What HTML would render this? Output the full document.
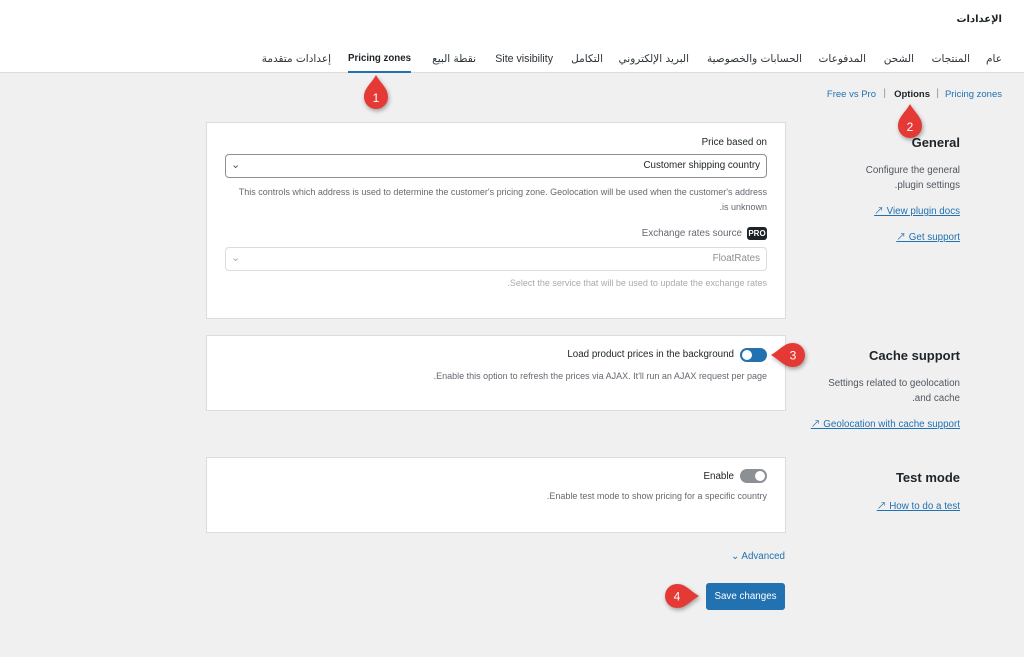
<!DOCTYPE html>
<html><head><meta charset="utf-8"><style>
*{margin:0;padding:0;box-sizing:border-box}
body{width:1024px;height:657px;background:#f0f0f1;font-family:"Liberation Sans","Noto Sans CJK SC",sans-serif;position:relative;overflow:hidden;color:#1d2327}
.a{position:absolute;white-space:nowrap}
.r{text-align:right}
#hdr{position:absolute;left:0;top:0;width:1024px;height:73px;background:#fff;border-bottom:1px solid #dcdcde}
.tab{position:absolute;top:51px;font-size:11px;line-height:16px;color:#2c3338}
.ar{direction:rtl;font-family:"DejaVu Sans",sans-serif;font-size:10.5px}
.card{position:absolute;left:206px;width:580px;background:#fff;border:1px solid #dcdcde}
.sel{position:absolute;left:225px;width:542px;height:24px;border:1px solid #8c8f94;border-radius:4px;background:#fff}
.lnk{color:#2271b1;text-decoration:underline;font-size:9.8px}
.h{font-size:13px;font-weight:bold;color:#1d2327}
.g{font-size:9px;color:#646970}
</style></head><body>
<div id="hdr"></div>
<div class="a ar" style="right:22px;top:14px;font-size:10px;font-weight:bold">الإعدادات</div>
<div class="tab a ar" style="right:22px">عام</div>
<div class="tab a ar" style="right:54px">المنتجات</div>
<div class="tab a ar" style="right:110px">الشحن</div>
<div class="tab a ar" style="right:158px">المدفوعات</div>
<div class="tab a ar" style="right:222px">الحسابات والخصوصية</div>
<div class="tab a ar" style="right:335px">البريد الإلكتروني</div>
<div class="tab a ar" style="right:421px">التكامل</div>
<div class="tab a" style="right:471px;font-size:10.6px;color:#2c3338">Site visibility</div>
<div class="tab a ar" style="right:548px">نقطة البيع</div>
<div class="tab a" style="right:613px;font-weight:bold;color:#1d2327;font-size:9.7px">Pricing zones</div>
<div class="a" style="left:348px;top:71px;width:63px;height:2px;background:#2271b1"></div>
<div class="tab a ar" style="right:693px">إعدادات متقدمة</div>

<div class="a" style="right:22px;top:89px;font-size:9.5px;color:#2271b1">Pricing zones</div>
<div class="a" style="right:85px;top:88px;font-size:10px;color:#8c8f94">|</div>
<div class="a" style="right:94px;top:89px;font-size:9.5px;font-weight:bold">Options</div>
<div class="a" style="right:138px;top:88px;font-size:10px;color:#8c8f94">|</div>
<div class="a" style="right:148px;top:89px;font-size:9.5px;color:#2271b1">Free vs Pro</div>

<div class="a h" style="right:64px;top:135px">General</div>
<div class="a r" style="right:64px;top:163px;line-height:15px;font-size:9.8px;color:#50575e">Configure the general<br>.plugin settings</div>
<div class="a lnk" style="right:64px;top:203px">↗ View plugin docs</div>
<div class="a lnk" style="right:64px;top:229px">↗ Get support</div>

<div class="a h" style="right:64px;top:348px">Cache support</div>
<div class="a r" style="right:64px;top:376px;line-height:15px;font-size:9.8px;color:#50575e">Settings related to geolocation<br>.and cache</div>
<div class="a lnk" style="right:64px;top:416px">↗ Geolocation with cache support</div>

<div class="a h" style="right:64px;top:470px">Test mode</div>
<div class="a lnk" style="right:64px;top:498px">↗ How to do a test</div>

<div class="card" style="top:122px;height:197px"></div>
<div class="a" style="right:257px;top:137px;font-size:9.8px">Price based on</div>
<div class="sel" style="top:154px"></div>
<div class="a" style="left:231px;top:158px;font-size:11px;color:#50575e">⌄</div>
<div class="a" style="right:264px;top:160px;font-size:9.8px">Customer shipping country</div>
<div class="a r g" style="right:257px;top:185px;line-height:15px">This controls which address is used to determine the customer's pricing zone. Geolocation will be used when the customer's address<br>.is unknown</div>
<div class="a" style="right:282px;top:228px;font-size:9.8px;color:#646970">Exchange rates source</div>
<div class="a" style="left:747px;top:227px;width:20px;height:13px;background:#1d2327;color:#fff;font-size:8px;font-weight:bold;border-radius:3px;text-align:center;line-height:13px">PRO</div>
<div class="sel" style="top:247px;border-color:#dcdcde"></div>
<div class="a" style="left:231px;top:251px;font-size:11px;color:#a7aaad">⌄</div>
<div class="a" style="right:264px;top:253px;font-size:9.8px;color:#8c8f94">FloatRates</div>
<div class="a g" style="right:257px;top:278px;color:#a7aaad">.Select the service that will be used to update the exchange rates</div>

<div class="card" style="top:335px;height:76px"></div>
<div class="a" style="right:290px;top:349px;font-size:9.8px">Load product prices in the background</div>
<div class="a" style="left:740px;top:348px;width:27px;height:14px;border-radius:7px;background:#2271b1"></div>
<div class="a" style="left:742px;top:350px;width:10px;height:10px;border-radius:5px;background:#fff"></div>
<div class="a g" style="right:257px;top:371px">.Enable this option to refresh the prices via AJAX. It'll run an AJAX request per page</div>

<div class="card" style="top:457px;height:76px"></div>
<div class="a" style="right:290px;top:471px;font-size:9.8px">Enable</div>
<div class="a" style="left:740px;top:469px;width:27px;height:14px;border-radius:7px;background:#8c8f94"></div>
<div class="a" style="left:755px;top:471px;width:10px;height:10px;border-radius:5px;background:#fff"></div>
<div class="a g" style="right:257px;top:491px">.Enable test mode to show pricing for a specific country</div>

<div class="a" style="right:239px;top:551px;font-size:9.8px;color:#2271b1">⌄ Advanced</div>
<div class="a" style="left:706px;top:583px;width:79px;height:27px;background:#2271b1;border-radius:3px;color:#fff;font-size:9.8px;text-align:center;line-height:27px">Save changes</div>

<svg class="a" style="left:362px;top:75px;filter:drop-shadow(1px 2px 2px rgba(0,0,0,.35))" width="28" height="38" viewBox="0 0 28 38"><path d="M14 0C19 9 26 13 26 22A12 12 0 0 1 2 22C2 13 9 9 14 0Z" fill="#e53935"/><text x="14" y="27" fill="#fff" font-size="12" text-anchor="middle" font-family="Liberation Sans">1</text></svg>
<svg class="a" style="left:896px;top:104px;filter:drop-shadow(1px 2px 2px rgba(0,0,0,.35))" width="28" height="38" viewBox="0 0 28 38"><path d="M14 0C19 9 26 13 26 22A12 12 0 0 1 2 22C2 13 9 9 14 0Z" fill="#e53935"/><text x="14" y="27" fill="#fff" font-size="12" text-anchor="middle" font-family="Liberation Sans">2</text></svg>
<svg class="a" style="left:771px;top:341px;filter:drop-shadow(1px 2px 2px rgba(0,0,0,.35))" width="38" height="28" viewBox="0 0 38 28"><path d="M0 14C9 9 13 2 22 2A12 12 0 0 1 22 26C13 26 9 19 0 14Z" fill="#e53935"/><text x="22" y="18.5" fill="#fff" font-size="12" text-anchor="middle" font-family="Liberation Sans">3</text></svg>
<svg class="a" style="left:661px;top:582px;filter:drop-shadow(1px 2px 2px rgba(0,0,0,.35))" width="38" height="28" viewBox="0 0 38 28"><path d="M38 14C29 9 25 2 16 2A12 12 0 0 0 16 26C25 26 29 19 38 14Z" fill="#e53935"/><text x="16" y="18.5" fill="#fff" font-size="12" text-anchor="middle" font-family="Liberation Sans">4</text></svg>
</body></html>
